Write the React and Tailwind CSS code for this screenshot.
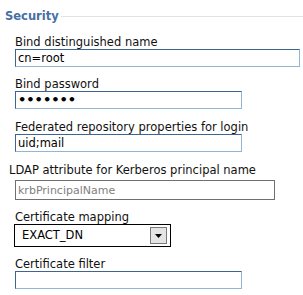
import { useState } from "react";

const inputCls =
  "block h-[18px] border border-t-[#3d6591] border-l-[#3d6591] border-r-[#93b6d6] border-b-[#93b6d6] bg-white px-[2px] text-[11.5px] text-black outline-none";

function Field({ label, children, className = "" }) {
  return (
    <div className={className}>
      <label className="block text-[11.5px] leading-[13px] text-[#111]">{label}</label>
      {children}
    </div>
  );
}

export default function App() {
  const [dn, setDn] = useState("cn=root");
  const [pw, setPw] = useState("abcdefg");
  const [props, setProps] = useState("uid;mail");
  const [filter, setFilter] = useState("");

  return (
    <div className="w-[303px] h-[295px] overflow-hidden bg-white font-['DejaVu_Sans',sans-serif]">
      <div className="flex items-center pt-[8px] pl-[5px]">
        <h2 className="text-[11.5px] font-bold leading-[16px] text-[#4570a6]">Security</h2>
        <div className="ml-[2px] h-px flex-1 bg-[#e2e2e2]" />
      </div>

      <div className="pl-[15px]">
        <Field label="Bind distinguished name" className="mt-[12px]">
          <input value={dn} onChange={(e) => setDn(e.target.value)} className={`${inputCls} w-[285px]`} />
        </Field>

        <Field label="Bind password" className="mt-[11px]">
          <input
            type="password"
            value={pw}
            onChange={(e) => setPw(e.target.value)}
            className={`${inputCls} w-[227px] text-[13px] font-bold`}
          />
        </Field>

        <Field label="Federated repository properties for login" className="mt-[12px]">
          <input value={props} onChange={(e) => setProps(e.target.value)} className={`${inputCls} w-[227px]`} />
        </Field>
      </div>

      <div className="mt-[12px] pl-[9px]">
        <label className="block text-[11.5px] leading-[13px] text-[#111]">LDAP attribute for Kerberos principal name</label>
        <input
          disabled
          value="krbPrincipalName"
          readOnly
          className="mt-[3px] ml-[6px] block h-[20px] w-[260px] border border-[#707070] bg-white px-[2px] text-[11px] text-[#808080]"
        />
      </div>

      <div className="pl-[15px]">
        <Field label="Certificate mapping" className="mt-[11px]">
          <div className="-ml-px flex h-[23px] w-[157px] items-center justify-between border border-black bg-white pl-[7px] pr-[3px]">
            <span className="text-[11.5px] text-black">EXACT_DN</span>
            <div className="flex h-[17px] w-[17px] items-center justify-center border border-[#7a7a7a] bg-[#e4e4e4]">
              <svg width="7" height="4" viewBox="0 0 7 4">
                <path d="M0 0h7L3.5 4z" fill="#000" />
              </svg>
            </div>
          </div>
        </Field>

        <Field label="Certificate filter" className="mt-[11px]">
          <input value={filter} onChange={(e) => setFilter(e.target.value)} className={`${inputCls} w-[227px]`} />
        </Field>
      </div>
    </div>
  );
}
